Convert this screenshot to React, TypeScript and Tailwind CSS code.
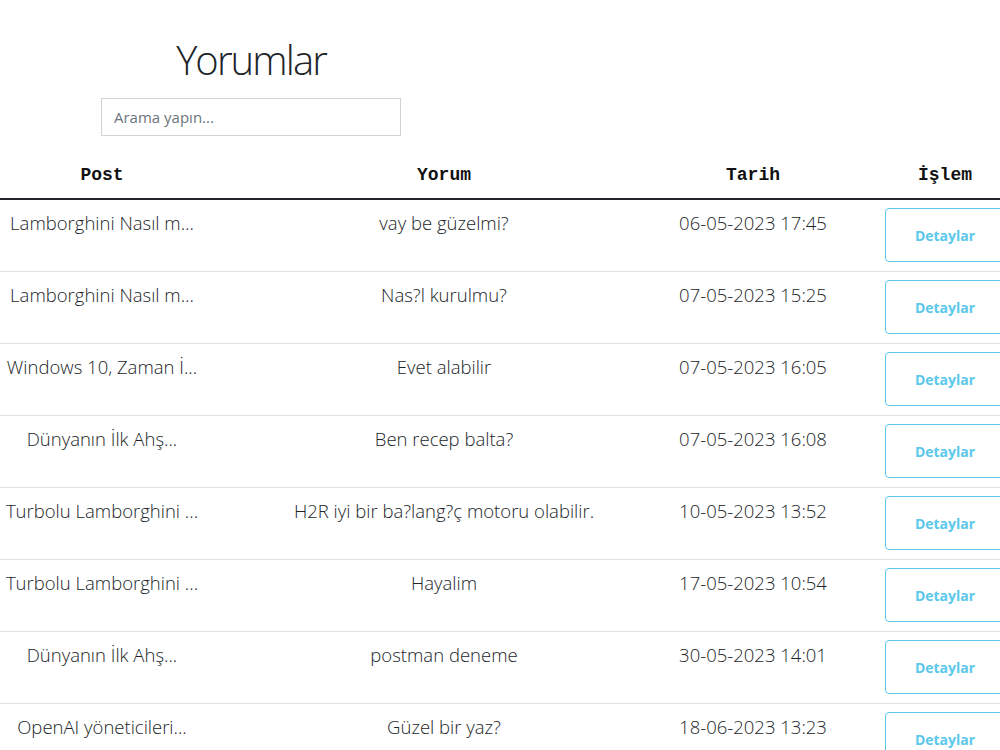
import React from "react";

const rows = [
  { post: "Lamborghini Nasıl m...", yorum: "vay be güzelmi?", tarih: "06-05-2023 17:45" },
  { post: "Lamborghini Nasıl m...", yorum: "Nas?l kurulmu?", tarih: "07-05-2023 15:25" },
  { post: "Windows 10, Zaman İ...", yorum: "Evet alabilir", tarih: "07-05-2023 16:05" },
  { post: "Dünyanın İlk Ahş...", yorum: "Ben recep balta?", tarih: "07-05-2023 16:08" },
  { post: "Turbolu Lamborghini ...", yorum: "H2R iyi bir ba?lang?ç motoru olabilir.", tarih: "10-05-2023 13:52" },
  { post: "Turbolu Lamborghini ...", yorum: "Hayalim", tarih: "17-05-2023 10:54" },
  { post: "Dünyanın İlk Ahş...", yorum: "postman deneme", tarih: "30-05-2023 14:01" },
  { post: "OpenAI yöneticileri...", yorum: "Güzel bir yaz?", tarih: "18-06-2023 13:23" },
];

const sans = "font-['Open_Sans','Noto_Sans',sans-serif]";

export default function App() {
  return (
    <div className={`w-[1000px] h-[750px] overflow-hidden bg-white text-[#212529] ${sans}`}>
      <div className="w-[502px] flex flex-col items-center pt-[34px]">
        <h1 className="text-[40px] font-light leading-[52px] tracking-[-1.9px]">Yorumlar</h1>
        <input
          className={`mt-[12px] w-[300px] h-[38px] border border-[#ced4da] px-[12px] text-[15px] placeholder:text-[#6c757d] outline-none ${sans}`}
          placeholder="Arama yapın..."
        />
      </div>
      <div className="mt-[14px] w-[1068px]">
        <div className="grid grid-cols-[204px_480px_138px_246px] h-[50px] pt-[2px] items-center border-b-2 border-[#212529] font-['Liberation_Mono','DejaVu_Sans_Mono',monospace] font-bold text-[18px] text-[#111]">
          <div className="flex justify-center">Post</div>
          <div className="flex justify-center">Yorum</div>
          <div className="flex justify-center">Tarih</div>
          <div className="flex justify-center">İşlem</div>
        </div>
        {rows.map((r, i) => (
          <div
            key={i}
            className="grid grid-cols-[204px_480px_138px_246px] h-[72px] border-b border-[#dee2e6] text-[18.5px] font-light"
          >
            <div className="flex justify-center whitespace-nowrap pt-[10px] leading-[26px]">{r.post}</div>
            <div className="flex justify-center whitespace-nowrap pt-[10px] leading-[26px]">{r.yorum}</div>
            <div className="flex justify-center whitespace-nowrap pt-[10px] leading-[26px]">{r.tarih}</div>
            <div className="flex justify-center pt-[8px]">
              <button className={`w-[120px] h-[54px] border border-[#5bc8ea] rounded-[4px] text-[#5bc8ea] font-bold text-[14px] bg-white ${sans}`}>
                Detaylar
              </button>
            </div>
          </div>
        ))}
      </div>
    </div>
  );
}
